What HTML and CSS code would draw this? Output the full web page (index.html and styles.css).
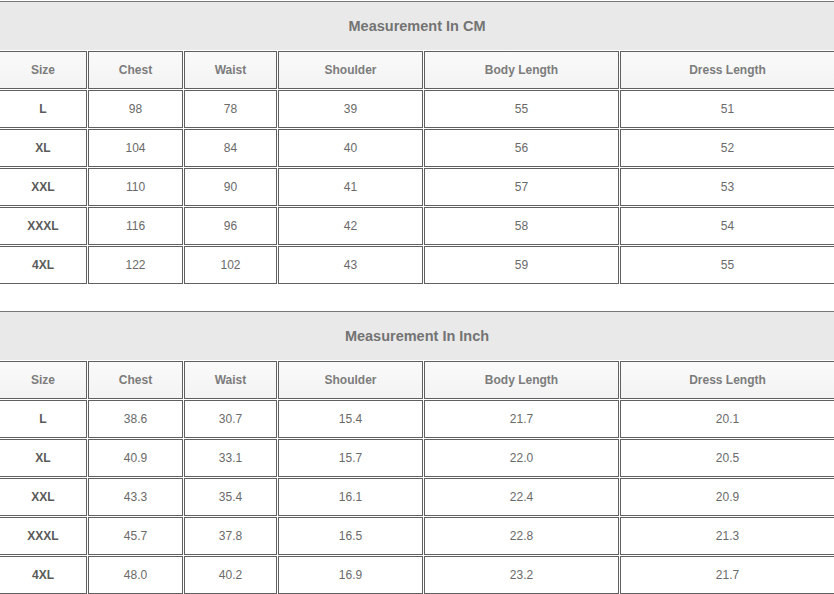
FILE: index.html
```html
<!DOCTYPE html>
<html>
<head>
<meta charset="utf-8">
<link rel="stylesheet" href="styles.css">
</head>
<body>
<div class="sheet">
  <div class="chart">
    <div class="title">Measurement In CM</div>
    <div class="cell head">Size</div><div class="cell head">Chest</div><div class="cell head">Waist</div><div class="cell head">Shoulder</div><div class="cell head">Body Length</div><div class="cell head">Dress Length</div>
    <div class="cell label">L</div><div class="cell">98</div><div class="cell">78</div><div class="cell">39</div><div class="cell">55</div><div class="cell">51</div>
    <div class="cell label">XL</div><div class="cell">104</div><div class="cell">84</div><div class="cell">40</div><div class="cell">56</div><div class="cell">52</div>
    <div class="cell label">XXL</div><div class="cell">110</div><div class="cell">90</div><div class="cell">41</div><div class="cell">57</div><div class="cell">53</div>
    <div class="cell label">XXXL</div><div class="cell">116</div><div class="cell">96</div><div class="cell">42</div><div class="cell">58</div><div class="cell">54</div>
    <div class="cell label">4XL</div><div class="cell">122</div><div class="cell">102</div><div class="cell">43</div><div class="cell">59</div><div class="cell">55</div>
  </div>
  <div class="chart">
    <div class="title">Measurement In Inch</div>
    <div class="cell head">Size</div><div class="cell head">Chest</div><div class="cell head">Waist</div><div class="cell head">Shoulder</div><div class="cell head">Body Length</div><div class="cell head">Dress Length</div>
    <div class="cell label">L</div><div class="cell">38.6</div><div class="cell">30.7</div><div class="cell">15.4</div><div class="cell">21.7</div><div class="cell">20.1</div>
    <div class="cell label">XL</div><div class="cell">40.9</div><div class="cell">33.1</div><div class="cell">15.7</div><div class="cell">22.0</div><div class="cell">20.5</div>
    <div class="cell label">XXL</div><div class="cell">43.3</div><div class="cell">35.4</div><div class="cell">16.1</div><div class="cell">22.4</div><div class="cell">20.9</div>
    <div class="cell label">XXXL</div><div class="cell">45.7</div><div class="cell">37.8</div><div class="cell">16.5</div><div class="cell">22.8</div><div class="cell">21.3</div>
    <div class="cell label">4XL</div><div class="cell">48.0</div><div class="cell">40.2</div><div class="cell">16.9</div><div class="cell">23.2</div><div class="cell">21.7</div>
  </div>
</div>
</body>
</html>
```
FILE: styles.css
```css
html, body {
  margin: 0;
  padding: 0;
  background: #ffffff;
}
.sheet {
  width: 834px;
  height: 594px;
  overflow: hidden;
  font-family: "Liberation Sans", Arial, sans-serif;
  padding-top: 1px;
  box-sizing: border-box;
}
.chart {
  display: grid;
  grid-template-columns: 88px 95px 93px 145px 195px 215px;
  grid-template-rows: 48px;
  grid-auto-rows: 38px;
  gap: 1px;
  margin-left: -1px;
  width: 836px;
  border-top: 1px solid #777777;
  margin-bottom: 27px;
}
.title {
  grid-column: 1 / -1;
  background: #e9e9e9;
  display: flex;
  align-items: center;
  justify-content: center;
  font-size: 14.5px;
  font-weight: bold;
  color: #737373;
}
.cell {
  box-sizing: border-box;
  border: 1px solid #606060;
  display: flex;
  align-items: center;
  justify-content: center;
  font-size: 12px;
  color: #6a6a6a;
  background: #ffffff;
}
.head {
  background: linear-gradient(#fafafa, #f3f3f3);
  font-weight: bold;
  color: #7c7c7c;
}
.label {
  font-weight: bold;
  color: #5a5a5a;
}
```
